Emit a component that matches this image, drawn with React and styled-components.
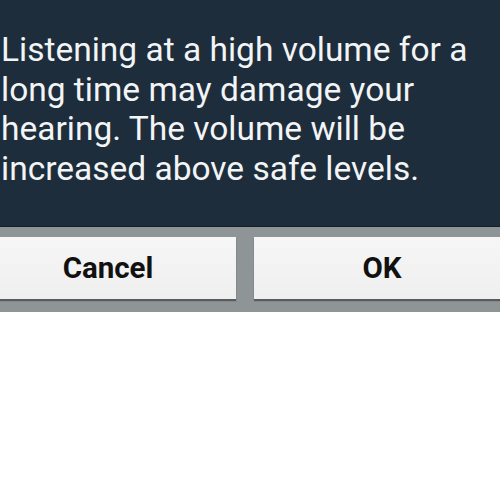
import React from 'react';
import styled, { createGlobalStyle } from 'styled-components';

const GlobalStyle = createGlobalStyle`
  html, body {
    margin: 0;
    padding: 0;
    background: #ffffff;
    overflow: hidden;
  }
  body {
    font-family: Roboto, "Noto Sans", sans-serif;
  }
`;

const Dialog = styled.div`
  width: 500px;
`;

const Message = styled.div`
  background: #1e2d3b;
  color: #f2f4f5;
  font-size: 33.5px;
  line-height: 39.5px;
  padding: 30px 0 0 1px;
  height: 227px;
  box-sizing: border-box;
  border-bottom: 1px solid #141e27;
  white-space: nowrap;
`;

const Line = styled.span`
  display: block;
`;

const ButtonBar = styled.div`
  background: #8f9496;
  display: flex;
  gap: 18px;
  margin: 0 -10px 0 -20px;
  padding: 10px 0 13px 0;
`;

const Button = styled.button`
  flex: 1;
  height: 62px;
  margin: 0;
  border: none;
  border-radius: 0;
  background: linear-gradient(#f6f6f6, #efefef);
  box-shadow: 0 2px 1px rgba(40, 44, 46, 0.55);
  font-family: Roboto, "Noto Sans", sans-serif;
  font-weight: 700;
  font-size: 29.5px;
  color: #111;
  padding: 0;
`;

export default function App() {
  return (
    <>
      <GlobalStyle />
      <Dialog>
        <Message>
          <Line>Listening at a high volume for a</Line>
          <Line>long time may damage your</Line>
          <Line>hearing. The volume will be</Line>
          <Line>increased above safe levels.</Line>
        </Message>
        <ButtonBar>
          <Button>Cancel</Button>
          <Button>OK</Button>
        </ButtonBar>
      </Dialog>
    </>
  );
}
